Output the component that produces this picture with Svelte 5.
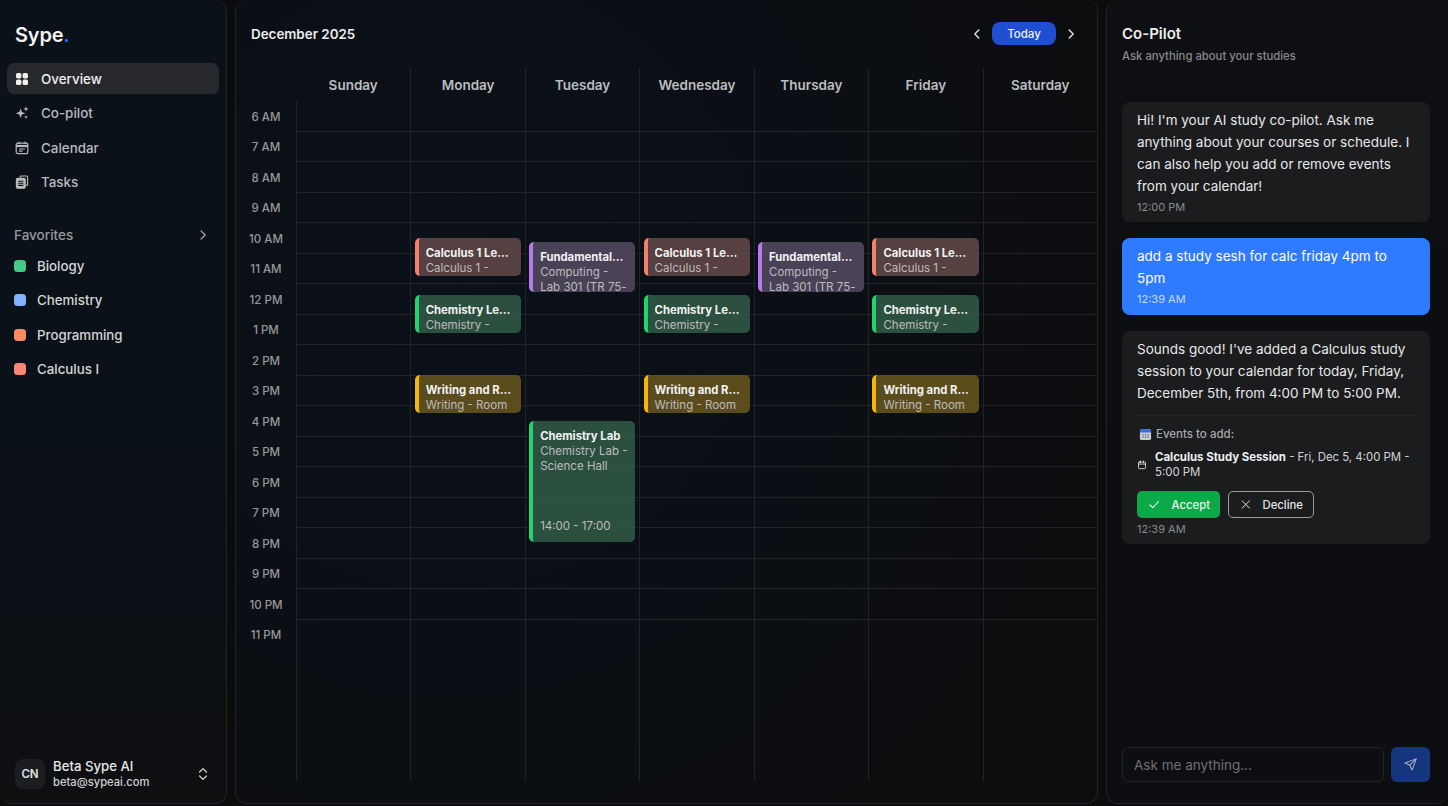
<script>
  const days = ["Sunday", "Monday", "Tuesday", "Wednesday", "Thursday", "Friday", "Saturday"];
  const hours = ["6 AM", "7 AM", "8 AM", "9 AM", "10 AM", "11 AM", "12 PM", "1 PM", "2 PM", "3 PM", "4 PM", "5 PM", "6 PM", "7 PM", "8 PM", "9 PM", "10 PM", "11 PM"];

  const calc = { title: "Calculus 1 Lecture", sub: "Calculus 1 - Room 204", color: "salmon", top: 137, height: 38 };
  const fund = { title: "Fundamentals of Computing", sub: "Computing - Lab 301 (TR 75-min)", color: "purple", top: 141, height: 50 };
  const chem = { title: "Chemistry Lecture", sub: "Chemistry - Science Hall", color: "green", top: 194, height: 38 };
  const writing = { title: "Writing and Rhetoric", sub: "Writing - Room 112", color: "amber", top: 274, height: 38 };
  const lab = { title: "Chemistry Lab", sub: "Chemistry Lab - Science Hall", color: "green", top: 320, height: 121, time: "14:00 - 17:00" };

  const events = [[], [calc, chem, writing], [fund, lab], [calc, chem, writing], [fund], [calc, chem, writing], []];

  const favorites = [
    { name: "Biology", color: "#45c786" },
    { name: "Chemistry", color: "#82b1ff" },
    { name: "Programming", color: "#fb8a60" },
    { name: "Calculus I", color: "#f98578" }
  ];
</script>

<div class="shell">
  <aside class="sidebar">
    <div class="logo">Sype<span>.</span></div>
    <nav>
      <div class="nav-item active">
        <svg viewBox="0 0 14 14" fill="currentColor"><rect x="1" y="1" width="5.4" height="5.4" rx="1.6"/><rect x="7.6" y="1" width="5.4" height="5.4" rx="1.6"/><rect x="1" y="7.6" width="5.4" height="5.4" rx="1.6"/><rect x="7.6" y="7.6" width="5.4" height="5.4" rx="1.6"/></svg>
        Overview
      </div>
      <div class="nav-item">
        <svg viewBox="0 0 14 14" fill="currentColor"><path d="M5.6 2.4 6.9 5.9l3.5 1.3-3.5 1.3-1.3 3.5-1.3-3.5L.8 7.2l3.5-1.3z"/><path d="M11 .6l.7 1.7 1.7.7-1.7.7-.7 1.7-.7-1.7-1.7-.7 1.7-.7z"/><path d="M11 9l.6 1.4 1.4.6-1.4.6-.6 1.4-.6-1.4-1.4-.6 1.4-.6z"/></svg>
        Co-pilot
      </div>
      <div class="nav-item">
        <svg viewBox="0 0 14 14" fill="none" stroke="currentColor" stroke-width="1.2"><rect x="1.2" y="2.2" width="11.6" height="10.4" rx="1.6"/><path d="M1.2 5h11.6" stroke-width="2.2"/><path d="M4 .8v2.2M10 .8v2.2M4 8h6M4 10.2h3.5"/></svg>
        Calendar
      </div>
      <div class="nav-item">
        <svg viewBox="0 0 14 14" fill="none" stroke="currentColor" stroke-width="1.1"><path d="M5 2.6V2a1 1 0 0 1 1-1h5.6a1 1 0 0 1 1 1v7.4a1 1 0 0 1-1 1h-.5"/><rect x="1.4" y="3.4" width="8.8" height="9.8" rx="1.2" fill="currentColor"/><path d="M3.2 6.2h5.2M3.2 8.3h5.2M3.2 10.4h5.2" stroke="#0b1017"/></svg>
        Tasks
      </div>
    </nav>

    <div class="fav-head">
      <span>Favorites</span>
      <svg viewBox="0 0 12 12" fill="none" stroke="currentColor" stroke-width="1.1" stroke-linecap="round" stroke-linejoin="round"><path d="M4 1.8 8.2 6 4 10.2"/></svg>
    </div>
    <div class="favs">
      {#each favorites as f}
        <div class="fav">
          <i style="background:{f.color}"></i>
          {f.name}
        </div>
      {/each}
    </div>

    <div class="user">
      <div class="avatar">CN</div>
      <div class="who">
        <strong>Beta Sype AI</strong>
        <small>beta@sypeai.com</small>
      </div>
      <svg viewBox="0 0 12 16" fill="none" stroke="currentColor" stroke-width="1.2" stroke-linecap="round" stroke-linejoin="round"><path d="M2.6 6 6 2.6 9.4 6M2.6 10 6 13.4 9.4 10"/></svg>
    </div>
  </aside>

  <main class="calendar">
    <header class="cal-top">
      <h1>December 2025</h1>
      <div class="cal-nav">
        <svg viewBox="0 0 12 12" fill="none" stroke="currentColor" stroke-width="1.3" stroke-linecap="round" stroke-linejoin="round"><path d="M7.8 2 3.8 6l4 4"/></svg>
        <button type="button">Today</button>
        <svg viewBox="0 0 12 12" fill="none" stroke="currentColor" stroke-width="1.3" stroke-linecap="round" stroke-linejoin="round"><path d="M4.2 2l4 4-4 4"/></svg>
      </div>
    </header>

    <div class="day-heads">
      <div class="corner"></div>
      {#each days as d}
        <div class="day-head">{d}</div>
      {/each}
    </div>

    <div class="grid">
      <div class="times">
        {#each hours as h}
          <div class="time">{h}</div>
        {/each}
      </div>
      {#each days as d, i}
        <div class="day">
          {#each hours as h}
            <div class="slot"></div>
          {/each}
          {#each events[i] as e}
            <div class="event {e.color}" style="top:{e.top}px;height:{e.height}px">
              <div class="ev-title">{e.title}</div>
              <div class="ev-sub">{e.sub}</div>
              {#if e.time}<div class="ev-time">{e.time}</div>{/if}
            </div>
          {/each}
        </div>
      {/each}
    </div>
  </main>

  <section class="copilot">
    <header class="co-top">
      <h2>Co-Pilot</h2>
      <p>Ask anything about your studies</p>
    </header>

    <div class="messages">
      <div class="msg">
        <p>Hi! I'm your AI study co-pilot. Ask me anything about your courses or schedule. I can also help you add or remove events from your calendar!</p>
        <time>12:00 PM</time>
      </div>
      <div class="msg mine">
        <p>add a study sesh for calc friday 4pm to 5pm</p>
        <time>12:39 AM</time>
      </div>
      <div class="msg">
        <p>Sounds good! I've added a Calculus study session to your calendar for today, Friday, December 5th, from 4:00 PM to 5:00 PM.</p>
        <div class="proposal">
          <div class="prop-head">
            <svg viewBox="0 0 14 14"><rect x="1" y="1.4" width="12" height="11.6" rx="1.8" fill="#c9ccd2"/><path d="M1 3.2a1.8 1.8 0 0 1 1.8-1.8h8.4A1.8 1.8 0 0 1 13 3.2v1.6H1z" fill="#2f6fe0"/><path d="M3.4 6.6h1.6v1.4H3.4zM6.2 6.6h1.6v1.4H6.2zM9 6.6h1.6v1.4H9zM3.4 9.2h1.6v1.4H3.4zM6.2 9.2h1.6v1.4H6.2zM9 9.2h1.6v1.4H9z" fill="#70757d"/></svg>
            Events to add:
          </div>
          <div class="prop-item">
            <svg viewBox="0 0 12 12" fill="none" stroke="currentColor" stroke-width="1.1" stroke-linecap="round"><rect x="1.8" y="2.4" width="8.4" height="8" rx="1"/><path d="M1.8 4.9h8.4M4.2 1.2v2M7.8 1.2v2"/></svg>
            <span><b>Calculus Study Session</b> - Fri, Dec 5, 4:00 PM - 5:00 PM</span>
          </div>
          <div class="actions">
            <button type="button" class="accept">
              <svg viewBox="0 0 14 14" fill="none" stroke="currentColor" stroke-width="1.2" stroke-linecap="round" stroke-linejoin="round"><path d="M2.2 7.4 5.4 10.6 11.8 3.6"/></svg>
              Accept
            </button>
            <button type="button" class="decline">
              <svg viewBox="0 0 14 14" fill="none" stroke="currentColor" stroke-width="1.2" stroke-linecap="round"><path d="M2.6 2.6l8.8 8.8M11.4 2.6l-8.8 8.8"/></svg>
              Decline
            </button>
          </div>
        </div>
        <time class="last">12:39 AM</time>
      </div>
    </div>

    <div class="composer">
      <input type="text" placeholder="Ask me anything..." />
      <button type="button" class="send" aria-label="Send">
        <svg viewBox="0 0 24 24" fill="none" stroke="currentColor" stroke-width="1.7" stroke-linecap="round" stroke-linejoin="round"><path d="M21 3 14.5 21l-3.6-7.9L3 9.5z"/><path d="M21 3 10.9 13.1"/></svg>
      </button>
    </div>
  </section>
</div>

<style>
  :global(body) {
    margin: 0;
    background: #0b0c0c;
    font-family: Inter, "Liberation Sans", sans-serif;
    color: #e8e8e8;
    overflow: hidden;
  }

  .shell {
    height: 804px;
    display: grid;
    grid-template-columns: 227px 863px 342px;
    column-gap: 8px;
  }

  .sidebar, .calendar, .copilot {
    box-sizing: border-box;
    border: 1px solid #212327;
    border-top: none;
    border-radius: 0 0 12px 12px;
    min-width: 0;
    height: 804px;
  }

  /* sidebar */
  .sidebar {
    background: linear-gradient(180deg, #0b1119 0%, #0b1119 55%, #0e0f11 100%);
    border-left: none;
    border-top-right-radius: 12px;
    display: flex;
    flex-direction: column;
    padding: 0 7px 0 7px;
  }

  .logo {
    font-size: 20px;
    font-weight: 600;
    color: #f2f2f2;
    padding: 23px 0 0 8px;
    line-height: 24px;
    height: 40px;
    letter-spacing: -0.2px;
  }
  .logo span { color: #1f6bff; }

  nav {
    display: flex;
    flex-direction: column;
    gap: 3.5px;
  }

  .nav-item {
    height: 31px;
    display: flex;
    align-items: center;
    gap: 12px;
    padding-left: 8px;
    border-radius: 7px;
    font-size: 13.4px;
    font-weight: 500;
    color: #b9babc;
  }
  .nav-item svg { width: 14px; height: 14px; flex: none; }
  .nav-item.active {
    background: #26282b;
    color: #f0f0f0;
  }

  .fav-head {
    display: flex;
    justify-content: space-between;
    align-items: center;
    padding: 0 10px 0 7px;
    margin-top: 27.5px;
    height: 20px;
    font-size: 13.5px;
    font-weight: 500;
    color: #97999c;
  }
  .fav-head svg { width: 12px; height: 12px; color: #b5b6b8; }

  .favs {
    display: flex;
    flex-direction: column;
    gap: 14.3px;
    margin-top: 11px;
    padding-left: 7px;
  }
  .fav {
    height: 20px;
    display: flex;
    align-items: center;
    gap: 11px;
    font-size: 13.3px;
    font-weight: 500;
    color: #d4d5d6;
  }
  .fav i {
    width: 12px;
    height: 12px;
    border-radius: 3.5px;
  }

  .user {
    margin-top: auto;
    display: flex;
    align-items: center;
    gap: 8px;
    padding: 0 10px 13px 8px;
  }
  .avatar {
    width: 30px;
    height: 30px;
    border-radius: 8px;
    background: #1c1d20;
    display: flex;
    align-items: center;
    justify-content: center;
    font-size: 11.5px;
    font-weight: 600;
    color: #e4e4e4;
  }
  .who { display: flex; flex-direction: column; flex: 1; line-height: 15px; }
  .who strong { font-size: 13.2px; font-weight: 500; color: #e6e6e6; line-height: 17px; }
  .who small { font-size: 11.2px; color: #cfcfcf; font-weight: 500; }
  .user svg { width: 12px; height: 16px; color: #d8d8d8; }

  /* calendar */
  .calendar {
    background:
      radial-gradient(circle at 25% 35%, #0b1119 0%, rgba(11, 17, 25, 0.6) 45%, rgba(13, 14, 16, 0) 80%),
      #0c0d0f;
    border-top-left-radius: 12px;
    border-top-right-radius: 12px;
    overflow: hidden;
  }
  .cal-top {
    height: 68px;
    display: flex;
    justify-content: space-between;
    align-items: flex-start;
    padding: 22px 20px 0 15px;
    box-sizing: border-box;
  }
  h1 {
    margin: 1px 0 0;
    font-size: 13.4px;
    font-weight: 600;
    line-height: 22px;
    color: #ececec;
  }
  .cal-nav {
    display: flex;
    align-items: center;
    gap: 9px;
    height: 23px;
    color: #e8e8e8;
  }
  .cal-nav svg { width: 12px; height: 12px; }
  .cal-nav button {
    width: 64px;
    height: 23px;
    border: none;
    border-radius: 8px;
    background: #1f4fd0;
    color: #eef2ff;
    font: 500 11.5px Inter, sans-serif;
  }

  .day-heads {
    display: grid;
    grid-template-columns: 60px repeat(7, 1fr);
    height: 33px;
  }
  .day-head {
    display: flex;
    align-items: center;
    justify-content: center;
    font-size: 13.5px;
    font-weight: 600;
    color: #bcbdbf;
  }
  .day-head + .day-head { border-left: 1px solid #212327; }

  .grid {
    display: grid;
    grid-template-columns: 60px repeat(7, 1fr);
    height: 680px;
  }
  .times { display: flex; flex-direction: column; padding-top: 0.5px; }
  .time {
    height: 30.5px;
    flex: none;
    display: flex;
    align-items: center;
    justify-content: center;
    font-size: 11.5px;
    font-weight: 500;
    color: #97989a;
  }
  .day {
    position: relative;
    border-left: 1px solid #212327;
    min-width: 0;
  }
  .slot {
    box-sizing: border-box;
    height: 30.5px;
    border-bottom: 1px solid #212327;
  }
  .slot:nth-child(18) { border-bottom: none; }

  .event {
    position: absolute;
    left: 3.3px;
    right: 4px;
    box-sizing: border-box;
    border-left: 4px solid;
    border-radius: 5px;
    padding: 8px 6px 8px 7px;
    overflow: hidden;
    display: flex;
    flex-direction: column;
  }
  .event.salmon { border-color: #f4806c; background: rgba(94, 70, 70, 0.9); }
  .event.purple { border-color: #b57bee; background: rgba(80, 71, 93, 0.9); }
  .event.green { border-color: #1ed56f; background: rgba(48, 88, 69, 0.9); }
  .event.amber { border-color: #f5b50f; background: rgba(100, 83, 30, 0.9); }

  .ev-title {
    font-size: 11.3px;
    font-weight: 700;
    line-height: 15px;
    color: #f2f2f2;
    white-space: nowrap;
    overflow: hidden;
    text-overflow: ellipsis;
    flex: none;
    padding-right: 3px;
  }
  .ev-sub {
    font-size: 11.5px;
    line-height: 15px;
    color: #bdbdbd;
    flex: none;
  }
  .ev-time {
    margin-top: auto;
    font-size: 11.5px;
    line-height: 15px;
    color: #bdbdbd;
  }

  /* co-pilot */
  .copilot {
    background: linear-gradient(180deg, #0e0f12 0%, #0d0e11 100%);
    border-top-left-radius: 12px;
    border-right: none;
    border-bottom-right-radius: 12px;
    display: flex;
    flex-direction: column;
    padding: 0 18px 0 15px;
  }
  .co-top { padding-top: 24px; height: 102px; box-sizing: border-box; }
  h2 {
    margin: 0;
    font-size: 15px;
    font-weight: 600;
    line-height: 20px;
    color: #ededed;
  }
  .co-top p {
    margin: 4px 0 0;
    font-size: 11.3px;
    line-height: 16px;
    color: #88898c;
    font-weight: 500;
  }

  .messages {
    display: flex;
    flex-direction: column;
    gap: 16px;
    flex: 1;
  }
  .msg {
    background: #1b1c1e;
    border-radius: 8px;
    padding: 7px 15px 7px;
  }
  .msg p {
    margin: 0;
    font-size: 13.5px;
    line-height: 22px;
    color: #e8e8e8;
  }
  .msg time {
    display: block;
    margin-top: 2px;
    font-size: 11px;
    line-height: 16px;
    color: #8a8b8d;
  }
  .msg time.last { margin-top: 3px; }
  .msg.mine { background: #2f7bff; padding-bottom: 8px; }
  .msg.mine p { color: #fff; }
  .msg.mine time { color: #c4dbff; }

  .proposal {
    border-top: 1px solid #26272a;
    margin-top: 11px;
    padding-top: 10px;
  }
  .prop-head {
    display: flex;
    align-items: center;
    gap: 4px;
    padding-left: 2px;
    font-size: 11.5px;
    font-weight: 500;
    line-height: 16px;
    color: #a8a9ab;
  }
  .prop-head svg { width: 13px; height: 13px; }
  .prop-item {
    display: flex;
    align-items: center;
    gap: 8px;
    margin-top: 7.5px;
    font-size: 11.4px;
    line-height: 15px;
    color: #d4d4d5;
  }
  .prop-item svg { width: 10px; height: 10px; flex: none; color: #d4d4d5; }
  .prop-item b { color: #efefef; font-weight: 700; }

  .actions {
    display: flex;
    gap: 8px;
    margin-top: 11.5px;
  }
  .actions button {
    height: 27px;
    box-sizing: border-box;
    border-radius: 5px;
    display: flex;
    align-items: center;
    gap: 11px;
    font: 500 11.3px Inter, sans-serif;
    padding: 0 10px 0 11px;
  }
  .actions svg { width: 13px; height: 13px; }
  .accept { background: #0aaa49; border: none; color: #e7f6ec; width: 83px; }
  .decline { background: transparent; border: 1px solid #9a9a9d; color: #e4e4e4; width: 86px; }

  .composer {
    display: flex;
    gap: 7px;
    padding-bottom: 21px;
  }
  .composer input {
    flex: 1;
    min-width: 0;
    height: 35px;
    box-sizing: border-box;
    background: transparent;
    border: 1px solid #222429;
    border-radius: 6px;
    padding: 0 11px;
    font: 400 13.5px Inter, sans-serif;
    color: #ddd;
  }
  .composer input::placeholder { color: #6f7074; opacity: 1; }
  .send {
    width: 39px;
    height: 35px;
    border: none;
    border-radius: 6px;
    background: #16357f;
    color: #a3aec8;
    display: flex;
    align-items: center;
    justify-content: center;
    padding: 0;
  }
  .send svg { width: 15px; height: 15px; }
</style>
